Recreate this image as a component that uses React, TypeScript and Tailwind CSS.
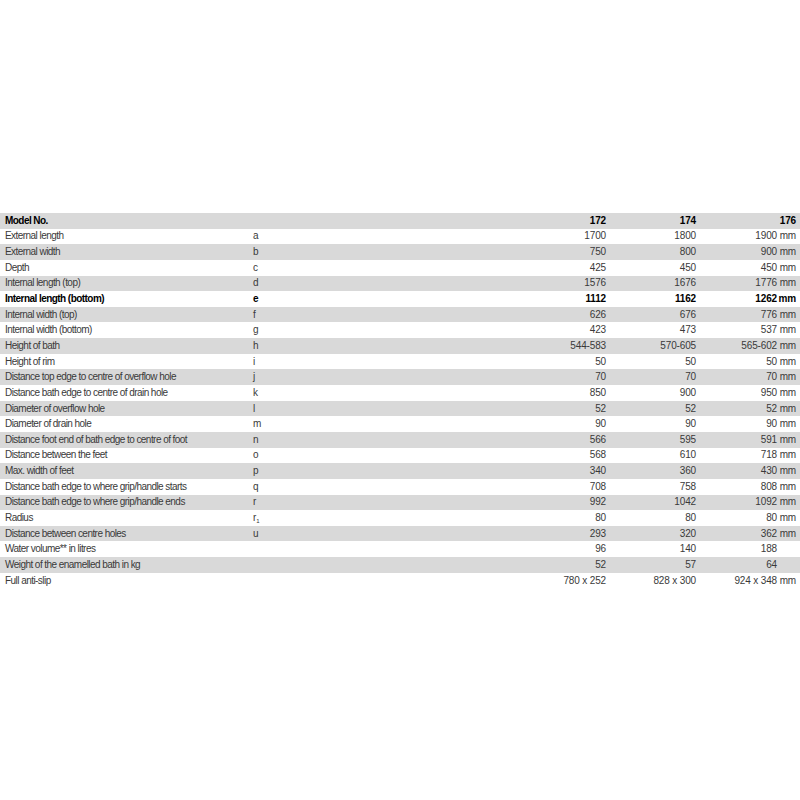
import React from "react";

type Row = {
  label: string;
  letter?: React.ReactNode;
  v: [string, string, string];
  mm?: boolean;
  bold?: boolean;
};

const rows: Row[] = [
  { label: "Model No.", v: ["172", "174", "176"], bold: true },
  { label: "External length", letter: "a", v: ["1700", "1800", "1900"], mm: true },
  { label: "External width", letter: "b", v: ["750", "800", "900"], mm: true },
  { label: "Depth", letter: "c", v: ["425", "450", "450"], mm: true },
  { label: "Internal length (top)", letter: "d", v: ["1576", "1676", "1776"], mm: true },
  { label: "Internal length (bottom)", letter: "e", v: ["1112", "1162", "1262"], mm: true, bold: true },
  { label: "Internal width (top)", letter: "f", v: ["626", "676", "776"], mm: true },
  { label: "Internal width (bottom)", letter: "g", v: ["423", "473", "537"], mm: true },
  { label: "Height of bath", letter: "h", v: ["544-583", "570-605", "565-602"], mm: true },
  { label: "Height of rim", letter: "i", v: ["50", "50", "50"], mm: true },
  { label: "Distance top edge to centre of overflow hole", letter: "j", v: ["70", "70", "70"], mm: true },
  { label: "Distance bath edge to centre of drain hole", letter: "k", v: ["850", "900", "950"], mm: true },
  { label: "Diameter of overflow hole", letter: "l", v: ["52", "52", "52"], mm: true },
  { label: "Diameter of drain hole", letter: "m", v: ["90", "90", "90"], mm: true },
  { label: "Distance foot end of bath edge to centre of foot", letter: "n", v: ["566", "595", "591"], mm: true },
  { label: "Distance between the feet", letter: "o", v: ["568", "610", "718"], mm: true },
  { label: "Max. width of feet", letter: "p", v: ["340", "360", "430"], mm: true },
  { label: "Distance bath edge to where grip/handle starts", letter: "q", v: ["708", "758", "808"], mm: true },
  { label: "Distance bath edge to where grip/handle ends", letter: "r", v: ["992", "1042", "1092"], mm: true },
  {
    label: "Radius",
    letter: (
      <span>
        r<sub className="text-[6px] align-baseline relative top-[2px]">1</sub>
      </span>
    ),
    v: ["80", "80", "80"],
    mm: true,
  },
  { label: "Distance between centre holes", letter: "u", v: ["293", "320", "362"], mm: true },
  { label: "Water volume** in litres", v: ["96", "140", "188"] },
  { label: "Weight of the enamelled bath in kg", v: ["52", "57", "64"] },
  { label: "Full anti-slip", v: ["780 x 252", "828 x 300", "924 x 348"], mm: true },
];

export default function App() {
  return (
    <div
      className="w-[800px] h-[800px] bg-white pt-[213px] text-[10px] tracking-[-0.15px] text-[#3a3a3a]"
      style={{ fontFamily: '"Liberation Sans Narrow", "Liberation Sans", Arial, sans-serif' }}
    >
      {rows.map((r, i) => {
        const header = i === 0;
        return (
          <div
            key={i}
            className={`flex items-center h-[15.65px] leading-none ${i % 2 === 0 ? "bg-[#d9d9d9]" : "bg-white"} ${r.bold ? "font-bold text-black" : ""}`}
          >
            <div className="w-[253px] pl-[5px] whitespace-nowrap tracking-[-0.55px]">{r.label}</div>
            <div className="w-[100px]">{r.letter}</div>
            <div className="w-[253px] text-right whitespace-nowrap">{r.v[0]}</div>
            <div className="w-[90px] text-right whitespace-nowrap">{r.v[1]}</div>
            <div className="w-[100px] flex justify-end whitespace-nowrap">
              {header ? (
                <span>{r.v[2]}</span>
              ) : (
                <>
                  <span>{r.v[2]}</span>
                  <span className={`w-[19px] text-right ${r.mm ? "" : "invisible"}`}>mm</span>
                </>
              )}
            </div>
          </div>
        );
      })}
    </div>
  );
}
